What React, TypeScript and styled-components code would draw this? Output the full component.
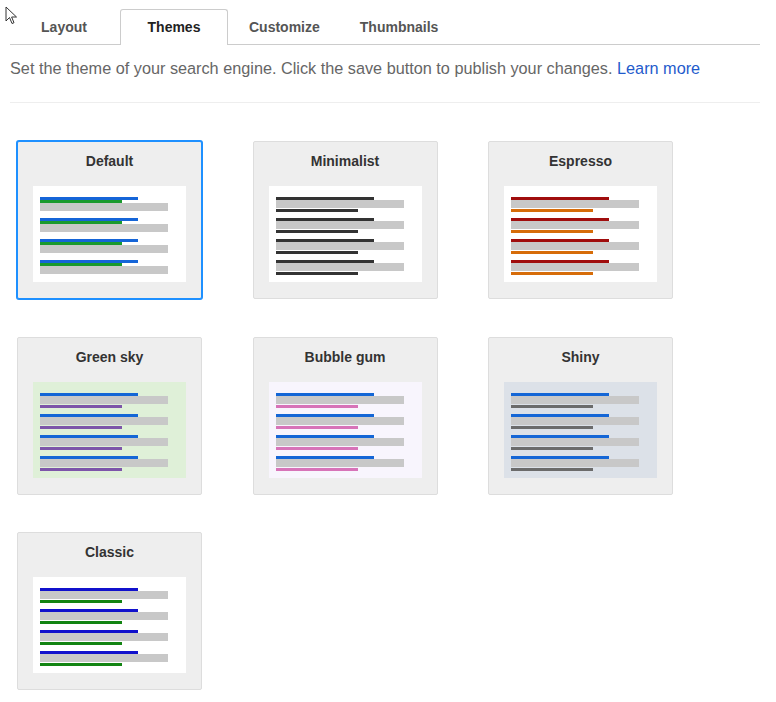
import React from "react";
import styled, { createGlobalStyle, css } from "styled-components";

const GlobalStyle = createGlobalStyle`
  html, body { margin: 0; padding: 0; background: #fff; }
  body { font-family: "Liberation Sans", Arial, sans-serif; }
`;

const Page = styled.div`
  position: relative;
  width: 776px;
  height: 702px;
  padding: 9px 16px 0 10px;
  box-sizing: border-box;
`;

const TabBar = styled.div`
  display: flex;
  border-bottom: 1px solid #ccc;
  height: 35px;
`;

const Tab = styled.div<{ $active?: boolean }>`
  min-width: 108px;
  box-sizing: border-box;
  padding: 0 18px 2px;
  margin-right: 2px;
  height: 36px;
  display: flex;
  align-items: center;
  justify-content: center;
  font-size: 14px;
  font-weight: bold;
  color: #555;
  border: 1px solid transparent;
  border-bottom: none;
  border-radius: 3px 3px 0 0;
  ${(p) =>
    p.$active &&
    css`
      color: #222;
      background: #fff;
      border-color: #ccc;
    `}
`;

const Intro = styled.div`
  padding: 14px 0 24px;
  border-bottom: 1px solid #eee;
  font-size: 16.25px;
  line-height: 19px;
  color: #666;
`;

const Link = styled.a`
  color: #1f5bcc;
  text-decoration: none;
`;

const Grid = styled.div`
  display: grid;
  grid-template-columns: repeat(3, 185px);
  column-gap: 50.5px;
  row-gap: 37.5px;
  padding: 38px 0 0 7px;
`;

const Card = styled.div<{ $selected?: boolean }>`
  width: 185px;
  height: 158px;
  box-sizing: border-box;
  background: #eee;
  border: 1px solid #ddd;
  border-radius: 2px;
  display: flex;
  flex-direction: column;
  align-items: center;
  ${(p) =>
    p.$selected &&
    css`
      border-color: #1e90ff;
      box-shadow: 0 0 0 1px #1e90ff;
    `}
`;

const CardTitle = styled.div`
  padding-top: 11px;
  height: 16px;
  line-height: 16px;
  margin-bottom: 17px;
  font-size: 14px;
  font-weight: bold;
  color: #333;
`;

const Preview = styled.div<{ $bg: string }>`
  width: 153px;
  height: 96px;
  box-sizing: border-box;
  background: ${(p) => p.$bg};
  padding: 11px 0 0 7px;
  display: flex;
  flex-direction: column;
  gap: 6px;
`;

const Result = styled.div`
  display: flex;
  flex-direction: column;
  height: 15px;
`;

const Bar = styled.div<{ $w: number; $h: number; $c: string; $mt?: number }>`
  width: ${(p) => p.$w}px;
  height: ${(p) => p.$h}px;
  background: ${(p) => p.$c};
  margin-top: ${(p) => p.$mt ?? 0}px;
`;

type Theme = {
  name: string;
  bg: string;
  title: string;
  url: string;
  urlFirst?: boolean;
  selected?: boolean;
};

const themes: Theme[] = [
  { name: "Default", bg: "#fff", title: "#1565d8", url: "#1a9a2e", urlFirst: true, selected: true },
  { name: "Minimalist", bg: "#fff", title: "#333", url: "#333" },
  { name: "Espresso", bg: "#fff", title: "#a00d0d", url: "#d66c09" },
  { name: "Green sky", bg: "#dff0d8", title: "#1466d6", url: "#7d55a9" },
  { name: "Bubble gum", bg: "#f8f5fd", title: "#1466d6", url: "#d773b8" },
  { name: "Shiny", bg: "#dce1e8", title: "#1466d6", url: "#6b6b6b" },
  { name: "Classic", bg: "#fff", title: "#1111cc", url: "#128412" },
];

const GRAY = "#c8c8c8";

function ThemeResult({ t }: { t: Theme }) {
  if (t.urlFirst) {
    return (
      <Result>
        <Bar $w={98} $h={3} $c={t.title} />
        <Bar $w={82} $h={3} $c={t.url} />
        <Bar $w={128} $h={8} $c={GRAY} />
      </Result>
    );
  }
  return (
    <Result>
      <Bar $w={98} $h={3} $c={t.title} />
      <Bar $w={128} $h={8} $c={GRAY} />
      <Bar $w={82} $h={3} $c={t.url} $mt={1} />
    </Result>
  );
}

const Cursor = styled.svg`
  position: absolute;
  left: 5px;
  top: 6px;
`;

export default function App() {
  return (
    <>
      <GlobalStyle />
      <Page>
        <Cursor width="14" height="20" viewBox="0 0 14 20">
          <path d="M1 1 L1 15 L4.5 11.5 L7 17.5 L9 16.7 L6.6 11 L11.5 11 Z" fill="#fff" stroke="#333" strokeWidth="1" strokeLinejoin="round" />
        </Cursor>
        <TabBar>
          <Tab>Layout</Tab>
          <Tab $active>Themes</Tab>
          <Tab>Customize</Tab>
          <Tab>Thumbnails</Tab>
        </TabBar>
        <Intro>
          Set the theme of your search engine. Click the save button to publish your changes.{" "}
          <Link href="#">Learn more</Link>
        </Intro>
        <Grid>
          {themes.map((t) => (
            <Card key={t.name} $selected={t.selected}>
              <CardTitle>{t.name}</CardTitle>
              <Preview $bg={t.bg}>
                {[0, 1, 2, 3].map((i) => (
                  <ThemeResult key={i} t={t} />
                ))}
              </Preview>
            </Card>
          ))}
        </Grid>
      </Page>
    </>
  );
}
